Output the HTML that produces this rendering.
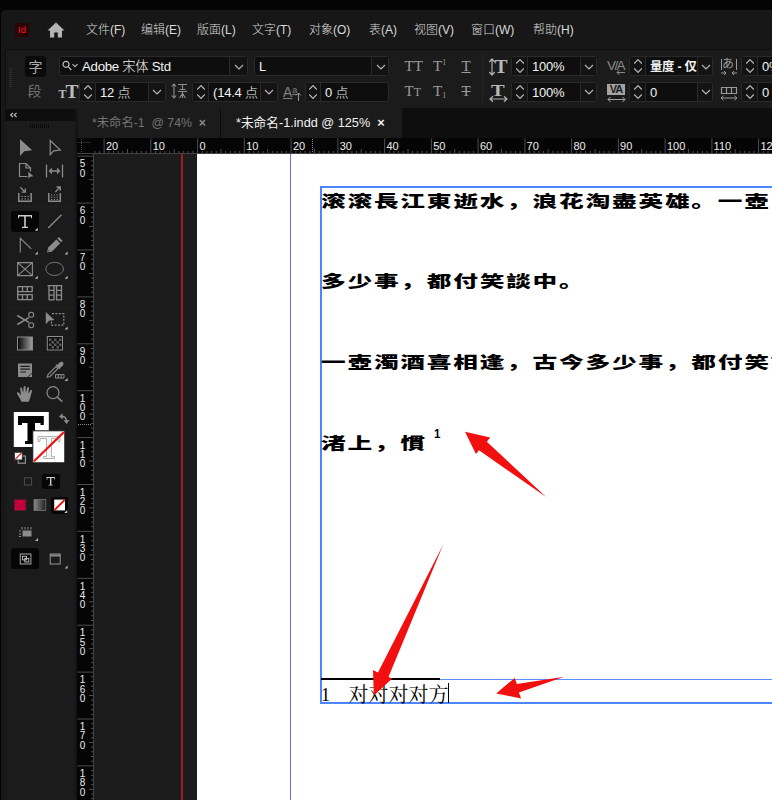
<!DOCTYPE html>
<html lang="zh-CN">
<head>
<meta charset="utf-8">
<title>InDesign</title>
<style>
*{box-sizing:border-box;margin:0;padding:0}
html,body{width:772px;height:800px;overflow:hidden;background:#040404}
body{position:relative;font-family:"Liberation Sans","Noto Sans CJK SC",sans-serif;color:#dcdcdc;font-size:12px}
.abs{position:absolute}
#win{position:absolute;left:1px;top:10px;width:771px;height:790px;background:#171717;border-top-left-radius:5px;overflow:hidden}
/* menu bar */
#menubar{position:absolute;left:0;top:0;width:771px;height:39px;background:#171717}
.mi{position:absolute;top:12px;font-size:12px;line-height:16px;color:#dadada;font-weight:300;white-space:nowrap}
/* control panel */
#cp{position:absolute;left:4px;top:39px;width:767px;height:59px;background:#1b1b1b;border-top:1px solid #0f0f0f;border-left:1px solid #0f0f0f}
.fld{position:absolute;height:21px;background:#0e0e0e;border:1px solid #2b2b2b;border-radius:3px;color:#f0f0f0;font-size:13px;line-height:19px;white-space:nowrap;overflow:hidden}
.btn{position:absolute;height:21px;background:#191919;border:1px solid #2b2b2b;border-radius:3px}
.ico{position:absolute;color:#a8a8a8}
/* tabs */
#tabbar{position:absolute;left:76px;top:98px;width:695px;height:30px;background:#0e0e0e}
.tab{position:absolute;top:0;height:30px;font-size:12.3px;line-height:31px;white-space:nowrap}
/* rulers */
#hr{position:absolute;left:76px;top:128px;width:695px;height:16px;background:#060606}
#vr{position:absolute;left:76px;top:144px;width:16px;height:646px;background:#060606}
.hl{position:absolute;font-size:11px;line-height:12px;color:#ececec}
.vl{position:absolute;width:7px;font-size:10px;line-height:9.2px;color:#ececec;text-align:center;word-break:break-all}
/* tools */
#tools{position:absolute;left:4px;top:98px;width:72px;height:692px;background:#1b1b1b}
/* canvas */
#paste{position:absolute;left:92px;top:144px;width:679px;height:646px;background:#1c1c1c}
#page{position:absolute;left:196px;top:144px;width:575px;height:646px;background:#fff}
.doc{position:absolute;color:#000;font-family:"Noto Sans CJK TC","Noto Sans CJK SC",sans-serif;font-weight:900;font-size:16.2px;line-height:24px;white-space:nowrap;transform-origin:0 0;transform:scaleX(1.524);letter-spacing:1.17px}
.fn{position:absolute;color:#000;font-family:"Noto Serif CJK SC","Liberation Serif",serif;font-weight:400;font-size:20px;line-height:24px;white-space:nowrap}
.bx{position:absolute;border:1px solid #2a2a2a;border-radius:3px}
.ct{line-height:19px;white-space:nowrap;font-weight:300}
</style>
</head>
<body>
<div id="win">
  <div id="menubar">
    <div class="abs" style="left:14px;top:13px;width:14px;height:14px;background:#2e0306;border-radius:2px;color:#f01c24;font-size:9.5px;font-weight:normal;line-height:14px;text-align:center">Id</div>
    <svg class="abs" style="left:46px;top:12px" width="18" height="16" viewBox="0 0 18 16"><path d="M9 0.5 L0.5 8.5 H3 V15.5 H7.2 V10.5 H10.8 V15.5 H15 V8.5 H17.5 Z" fill="#b4b4b4"/></svg>
    <div class="mi" style="left:85px">文件(F)</div>
    <div class="mi" style="left:140px">编辑(E)</div>
    <div class="mi" style="left:196px">版面(L)</div>
    <div class="mi" style="left:251px">文字(T)</div>
    <div class="mi" style="left:308px">对象(O)</div>
    <div class="mi" style="left:368px">表(A)</div>
    <div class="mi" style="left:413px">视图(V)</div>
    <div class="mi" style="left:470px">窗口(W)</div>
    <div class="mi" style="left:532px">帮助(H)</div>
  </div>
  <div id="cp"></div>
  <div id="tabbar">
    <div class="tab" style="left:0;width:144px;background:#1b1b1b;color:#747474;padding-left:15px;border-right:1px solid #0c0c0c">*未命名-1 &nbsp;@ 74% &nbsp;<b style="color:#888">×</b></div>
    <div class="tab" style="left:144px;width:181px;background:#1b1b1b;color:#f2f2f2;padding-left:15px;font-size:12.7px">*未命名-1.indd @ 125% &nbsp;<b>×</b></div>
  </div>
  <div id="paste"></div>
  <div id="page"></div>
  <div id="ov" class="abs" style="left:-1px;top:-10px;width:772px;height:800px">
    <!--TL-START-->
    <!-- tools -->
    <div class="abs" style="left:5px;top:108px;width:69.5px;height:692px;background:#1b1b1b"></div>
    <div class="abs" style="left:74.5px;top:108px;width:3px;height:692px;background:#141414"></div>
    <div class="abs" style="left:5px;top:108.5px;width:69.5px;height:12px;background:#0e0e0e"></div>
    <div class="abs" style="left:30px;top:124px;width:19px;height:4px;background:repeating-linear-gradient(90deg,#0c0c0c 0 1px,transparent 1px 2px)"></div>
    <div class="abs" style="left:11px;top:210.5px;width:27.5px;height:21.5px;background:#060606;border-radius:3px"></div>
    <div class="abs" style="left:42px;top:473.5px;width:17.5px;height:15.0px;background:#060606;border-radius:3px"></div>
    <div class="abs" style="left:51px;top:496.5px;width:17px;height:17.0px;background:#060606;border-radius:3px"></div>
    <div class="abs" style="left:11px;top:548px;width:27.5px;height:21px;background:#060606;border-radius:3px"></div>
    <div class="abs" style="left:8px;top:205.5px;width:64px;height:1px;background:#1f1f1f"></div>
    <div class="abs" style="left:8px;top:306.5px;width:64px;height:1px;background:#1f1f1f"></div>
    <div class="abs" style="left:8px;top:356.5px;width:64px;height:1px;background:#1f1f1f"></div>
    <svg class="abs" style="left:0;top:0" width="80" height="800" viewBox="0 0 80 800"><path d="M13 112.8L10.6 115L13 117.2M16.6 112.8L14.2 115L16.6 117.2" fill="none" stroke="#c4c4c4" stroke-width="1.1"/><path d="M20 139.3V156L24.3 151.3L32.2 150.2Z" fill="#8c8c8c"/><path d="M50.2 140.5V154.6L53.6 150.9L60.3 150Z" fill="none" stroke="#8c8c8c" stroke-width="1.2" stroke-linejoin="miter"/><path d="M27.5 176.5H19.5V163.5H26L30.5 168V171.5M26 163.5V168H30.5" fill="none" stroke="#8c8c8c" stroke-width="1.2"/><path d="M28.3 171.8V178.6L30.2 176.7L33.4 176.2Z" fill="#8c8c8c"/><path d="M46.5 164.5V177.5M62.5 164.5V177.5M49.5 171H59.5M52 168.5L49.5 171L52 173.5M57 168.5L59.5 171L57 173.5" fill="none" stroke="#8c8c8c" stroke-width="1.3"/><path d="M18.8 193V201.3H31.2V193" fill="none" stroke="#8c8c8c" stroke-width="1.5"/><path d="M20.3 187.2L25 191.9M25.3 188.6V192.2H21.7" fill="none" stroke="#8c8c8c" stroke-width="1.3"/><path d="M21.5 196.5H23M24.5 196.5H26M27.5 196.5H29M21.5 199H23M24.5 199H26M27.5 199H29" stroke="#8c8c8c" stroke-width="1.2"/><path d="M48.8 193V201.3H60.3V193" fill="none" stroke="#8c8c8c" stroke-width="1.5"/><path d="M55.3 192L60 187.3M56.5 187H60.3V190.8" fill="none" stroke="#8c8c8c" stroke-width="1.3"/><path d="M51 195H52.3M53.8 195H55.1M56.6 195H57.9M51 197.3H52.3M53.8 197.3H55.1M56.6 197.3H57.9M51 199.5H52.3M53.8 199.5H55.1M56.6 199.5H57.9" stroke="#8c8c8c" stroke-width="1.1"/><path d="M18 215H32V218.3H31V216.4H25.8V226.8H28V228H22V226.8H24.2V216.4H19V218.3H18Z" fill="#cdcdcd"/><path d="M37.8 230.8H34.8L37.8 227.8Z" fill="#c8c8c8"/><path d="M48.2 228L61.5 214.8" stroke="#8c8c8c" stroke-width="1.3"/><path d="M20.3 252.5V238.3L31.3 248.8" fill="none" stroke="#8c8c8c" stroke-width="1.1"/><path d="M37.8 254.6H34.8L37.8 251.6Z" fill="#b8b8b8"/><path d="M47 252.5L48.2 247.6L56.4 239.4L60.2 243.2L52 251.4Z" fill="#8c8c8c"/><path d="M57.3 238.5L58.8 237L62.6 240.8L61.1 242.3Z" fill="#8c8c8c"/><path d="M48.1 251.2L49.3 250" stroke="#1b1b1b" stroke-width="0.9"/><path d="M67.6 254.6H64.6L67.6 251.6Z" fill="#b8b8b8"/><path d="M17.6 262.6H32.4V275.6H17.6ZM17.6 262.6L32.4 275.6M32.4 262.6L17.6 275.6" fill="none" stroke="#8c8c8c" stroke-width="1.1"/><path d="M37.8 278.8H34.8L37.8 275.8Z" fill="#b8b8b8"/><ellipse cx="54.6" cy="268.9" rx="8.8" ry="6.6" fill="none" stroke="#747474" stroke-width="1"/><path d="M67.6 278.8H64.6L67.6 275.8Z" fill="#b8b8b8"/><path d="M17.7 286.5V300M17.7 286.7H32.8M17.7 291.7H32.8M17.7 294.7H32.8M17.7 299.6H32.8M22.5 286.7V291.7M27.3 286.7V291.7M32.2 286.7V291.7M22.5 294.7V299.6M27.3 294.7V299.6M32.2 294.7V299.6" fill="none" stroke="#8c8c8c" stroke-width="1.3"/><path d="M47.5 285.7H62.3M49 285.7V300.3M54 285.7V300.3M56.5 285.7V300.3M61.5 285.7V300.3M49 290.3H54M49 295.2H54M49 299.8H54M56.5 290.3H61.5M56.5 295.2H61.5M56.5 299.8H61.5" fill="none" stroke="#8c8c8c" stroke-width="1.3"/><path d="M17.3 315.5L29 322.3M17.3 324.5L29 317.7" stroke="#8c8c8c" stroke-width="1.5"/><circle cx="31.2" cy="314.8" r="2.5" fill="none" stroke="#8c8c8c" stroke-width="1.1"/><circle cx="31.2" cy="325.2" r="2.5" fill="none" stroke="#8c8c8c" stroke-width="1.1"/><path d="M45.8 312V324.3L49 320.8L54.4 320Z" fill="#8c8c8c"/><path d="M52 313.6H63.8V325.2H51.5V321.5" fill="none" stroke="#8c8c8c" stroke-width="1.2" stroke-dasharray="2 1.4"/><path d="M67.6 329.5H64.6L67.6 326.5Z" fill="#b8b8b8"/><path d="M47.2 377.3L48 374.5L56 366.5L58 368.5L50 376.5Z" fill="none" stroke="#8c8c8c" stroke-width="1.1"/><path d="M56 364.5L60 368.5M57.6 366L60.3 362.8Q62 361.8 62.8 363.2Q63.2 364.5 62 365.6L59 368Z" fill="#8c8c8c" stroke="#8c8c8c" stroke-width="1.3"/><path d="M55.5 374.6H64V378H55.5ZM58.3 374.6V378M61.1 374.6V378" fill="none" stroke="#8c8c8c" stroke-width="1"/><path d="M67.6 381H64.6L67.6 378Z" fill="#b8b8b8"/><path d="M18 363.5H32V372.5L27.5 377H18Z" fill="#8c8c8c"/><path d="M20.3 366.4H29.8M20.3 369.2H29.8M20.3 372H26" stroke="#1b1b1b" stroke-width="1.2"/><path d="M28.3 377L32 373.3V377Z" fill="#8c8c8c"/><path d="M21.5 401.8C20 398.5 18.2 396 17 393.6C16.6 392.4 18 391.8 18.9 392.8L21 395.3L20.2 388.6C20.1 387.3 21.8 387.1 22.1 388.4L23.2 393L23.6 387C23.7 385.7 25.4 385.7 25.5 387L25.8 393L27.2 387.8C27.5 386.6 29.1 386.9 29 388.2L28.2 393.8L30.3 390.4C31 389.4 32.4 390.1 32 391.3C31 394.5 30.3 398 28.8 401.8Z" fill="#8c8c8c"/><circle cx="53" cy="392.6" r="6" fill="none" stroke="#8c8c8c" stroke-width="1.2"/><path d="M57.3 397L62.2 401.6" stroke="#8c8c8c" stroke-width="1.6"/><rect x="13.8" y="412" width="35" height="35" fill="#fff"/><path d="M18 416H43.8V425H40.5V423H35V444H25V441H27.5V423H22V425H18Z" fill="#000"/><rect x="32.8" y="430.8" width="32" height="32" fill="#fff" stroke="#1b1b1b" stroke-width="1"/><path d="M38 436.5H60V441.5H58V438.5H51.5V456.5H54.5V458.5H43.5V456.5H46.5V438.5H40V441.5H38Z" fill="#f4f4f4" stroke="#b4b4b4" stroke-width="1"/><path d="M34 461.2L63.8 432.2" stroke="#f20d0d" stroke-width="2.2"/><path d="M61 416.5Q66.5 416 66.5 421.5" fill="none" stroke="#8c8c8c" stroke-width="1.6"/><path d="M62.5 413.2L59 416.6L62.8 419.3Z" fill="#8c8c8c"/><path d="M63.6 420.2L66.6 424L69.4 420Z" fill="#8c8c8c"/><rect x="18.2" y="456" width="7.2" height="7.2" fill="none" stroke="#9a9a9a" stroke-width="1.1"/><rect x="14.6" y="452.3" width="7.6" height="7.6" fill="#fff" stroke="#2a2a2a" stroke-width="0.8"/><path d="M15.3 459.2L21.5 453" stroke="#e02020" stroke-width="1.2"/><rect x="24.4" y="477.8" width="7.2" height="7.2" fill="none" stroke="#4e4e4e" stroke-width="1"/><path d="M46.6 477H54.8V479.4H54V478H51.4V484.7H52.7V485.6H48.7V484.7H50V478H47.4V479.4H46.6Z" fill="#cfcfcf"/><defs><linearGradient id="g1" x1="0" x2="1" y1="0" y2="0"><stop offset="0" stop-color="#8a8a8a"/><stop offset="1" stop-color="#202020"/></linearGradient><linearGradient id="g2" x1="0" x2="1" y1="0" y2="0"><stop offset="0" stop-color="#050505"/><stop offset="1" stop-color="#a0a0a0"/></linearGradient></defs><rect x="14.3" y="499.6" width="11.6" height="10.8" fill="#c4003c" stroke="#5a2030" stroke-width="0.6"/><rect x="34" y="499.6" width="11.8" height="10.8" fill="url(#g1)" stroke="#777" stroke-width="0.8"/><rect x="54.2" y="499.6" width="10.8" height="10.8" fill="#fff"/><path d="M54.6 510L64.6 500" stroke="#f20d0d" stroke-width="1.8"/><path d="M67.2 513H64.2L67.2 510Z" fill="#c8c8c8"/><rect x="17.5" y="337" width="15" height="13" fill="url(#g2)" stroke="#8c8c8c" stroke-width="1"/><rect x="47.3" y="336.5" width="15.2" height="13.5" fill="#111" stroke="#8c8c8c" stroke-width="1"/><path d="M49 338.5H51.5V341H49ZM54 338.5H56.5V341H54ZM59 338.5H61.5V341H59ZM51.5 341H54V343.5H51.5ZM56.5 341H59V343.5H56.5ZM49 343.5H51.5V346H49ZM54 343.5H56.5V346H54ZM59 343.5H61.5V346H59ZM51.5 346H54V348.5H51.5ZM56.5 346H59V348.5H56.5Z" fill="#5a5a5a"/><rect x="22.5" y="530.5" width="9" height="6" fill="#8c8c8c"/><path d="M22 527V529.5M25 527V529.5M28 527V529.5M31 527V529.5M19 531H21M19 534H21M19 536.5H21" stroke="#8c8c8c" stroke-width="1"/><path d="M38 541H35L38 538Z" fill="#b8b8b8"/><rect x="20.3" y="554" width="10.6" height="10" fill="none" stroke="#9a9a9a" stroke-width="1.1"/><rect x="22.5" y="556.3" width="4" height="3.6" fill="none" stroke="#c8c8c8" stroke-width="0.9"/><rect x="24.8" y="558.4" width="4" height="3.6" fill="none" stroke="#c8c8c8" stroke-width="0.9"/><rect x="50.2" y="554" width="10" height="10" fill="none" stroke="#8c8c8c" stroke-width="1.1"/><path d="M50.2 555.5H60.2" stroke="#8c8c8c" stroke-width="2"/><path d="M67.6 568.5H64.6L67.6 565.5Z" fill="#b8b8b8"/></svg>
    <!--TL-END-->
    <!--RU-START-->
    <!-- rulers -->
    <div class="abs" style="left:77px;top:138px;width:695px;height:16px;background:#050505;border-bottom:1px solid #444"></div>
    <div class="abs" style="left:77px;top:154px;width:17px;height:646px;background:#050505;border-right:1px solid #444"></div>
    <svg class="abs" style="left:0;top:0" width="772" height="800" viewBox="0 0 772 800"><path d="M94.8 151V153M99.4 151V153M104.1 138.5V153M108.8 151V153M113.5 151V153M118.1 151V153M122.8 151V153M127.5 149V153M132.1 151V153M136.8 151V153M141.5 151V153M146.2 151V153M150.8 138.5V153M155.5 151V153M160.2 151V153M164.9 151V153M169.6 151V153M174.2 149V153M178.9 151V153M183.6 151V153M188.2 151V153M192.9 151V153M197.6 138.5V153M202.3 151V153M206.9 151V153M211.6 151V153M216.3 151V153M221.0 149V153M225.6 151V153M230.3 151V153M235.0 151V153M239.7 151V153M244.3 138.5V153M249.0 151V153M253.7 151V153M258.4 151V153M263.1 151V153M267.7 149V153M272.4 151V153M277.1 151V153M281.8 151V153M286.4 151V153M291.1 138.5V153M295.8 151V153M300.4 151V153M305.1 151V153M309.8 151V153M314.5 149V153M319.1 151V153M323.8 151V153M328.5 151V153M333.2 151V153M337.9 138.5V153M342.5 151V153M347.2 151V153M351.9 151V153M356.5 151V153M361.2 149V153M365.9 151V153M370.6 151V153M375.2 151V153M379.9 151V153M384.6 138.5V153M389.3 151V153M393.9 151V153M398.6 151V153M403.3 151V153M408.0 149V153M412.6 151V153M417.3 151V153M422.0 151V153M426.7 151V153M431.4 138.5V153M436.0 151V153M440.7 151V153M445.4 151V153M450.0 151V153M454.7 149V153M459.4 151V153M464.1 151V153M468.8 151V153M473.4 151V153M478.1 138.5V153M482.8 151V153M487.4 151V153M492.1 151V153M496.8 151V153M501.5 149V153M506.1 151V153M510.8 151V153M515.5 151V153M520.2 151V153M524.9 138.5V153M529.5 151V153M534.2 151V153M538.9 151V153M543.5 151V153M548.2 149V153M552.9 151V153M557.6 151V153M562.2 151V153M566.9 151V153M571.6 138.5V153M576.3 151V153M580.9 151V153M585.6 151V153M590.3 151V153M595.0 149V153M599.6 151V153M604.3 151V153M609.0 151V153M613.7 151V153M618.4 138.5V153M623.0 151V153M627.7 151V153M632.4 151V153M637.0 151V153M641.7 149V153M646.4 151V153M651.1 151V153M655.8 151V153M660.4 151V153M665.1 138.5V153M669.8 151V153M674.4 151V153M679.1 151V153M683.8 151V153M688.5 149V153M693.1 151V153M697.8 151V153M702.5 151V153M707.2 151V153M711.9 138.5V153M716.5 151V153M721.2 151V153M725.9 151V153M730.5 151V153M735.2 149V153M739.9 151V153M744.6 151V153M749.2 151V153M753.9 151V153M758.6 138.5V153M763.3 151V153M768.0 151V153M772.6 151V153M77.5 156.2H93M91 160.9H93M91 165.6H93M91 170.3H93M91 175.0H93M89 179.7H93M91 184.3H93M91 189.0H93M91 193.7H93M91 198.4H93M77.5 203.1H93M91 207.8H93M91 212.5H93M91 217.2H93M91 221.9H93M89 226.5H93M91 231.2H93M91 235.9H93M91 240.6H93M91 245.3H93M77.5 250.0H93M91 254.7H93M91 259.4H93M91 264.1H93M91 268.8H93M89 273.5H93M91 278.1H93M91 282.8H93M91 287.5H93M91 292.2H93M77.5 296.9H93M91 301.6H93M91 306.3H93M91 311.0H93M91 315.7H93M89 320.4H93M91 325.0H93M91 329.7H93M91 334.4H93M91 339.1H93M77.5 343.8H93M91 348.5H93M91 353.2H93M91 357.9H93M91 362.6H93M89 367.2H93M91 371.9H93M91 376.6H93M91 381.3H93M91 386.0H93M77.5 390.7H93M91 395.4H93M91 400.1H93M91 404.8H93M91 409.5H93M89 414.1H93M91 418.8H93M91 423.5H93M91 428.2H93M91 432.9H93M77.5 437.6H93M91 442.3H93M91 447.0H93M91 451.7H93M91 456.4H93M89 461.0H93M91 465.7H93M91 470.4H93M91 475.1H93M91 479.8H93M77.5 484.5H93M91 489.2H93M91 493.9H93M91 498.6H93M91 503.3H93M89 507.9H93M91 512.6H93M91 517.3H93M91 522.0H93M91 526.7H93M77.5 531.4H93M91 536.1H93M91 540.8H93M91 545.5H93M91 550.2H93M89 554.9H93M91 559.5H93M91 564.2H93M91 568.9H93M91 573.6H93M77.5 578.3H93M91 583.0H93M91 587.7H93M91 592.4H93M91 597.1H93M89 601.8H93M91 606.4H93M91 611.1H93M91 615.8H93M91 620.5H93M77.5 625.2H93M91 629.9H93M91 634.6H93M91 639.3H93M91 644.0H93M89 648.6H93M91 653.3H93M91 658.0H93M91 662.7H93M91 667.4H93M77.5 672.1H93M91 676.8H93M91 681.5H93M91 686.2H93M91 690.9H93M89 695.5H93M91 700.2H93M91 704.9H93M91 709.6H93M91 714.3H93M77.5 719.0H93M91 723.7H93M91 728.4H93M91 733.1H93M91 737.8H93M89 742.5H93M91 747.1H93M91 751.8H93M91 756.5H93M91 761.2H93M77.5 765.9H93M91 770.6H93M91 775.3H93M91 780.0H93M91 784.7H93M89 789.4H93M91 794.0H93M91 798.7H93" fill="none" stroke="#4e4e4e" stroke-width="1"/><path d="M78.5 142.5H91M81.5 139V152" fill="none" stroke="#4c4c4c" stroke-width="1" stroke-dasharray="1 1"/><path d="M312.5 139V152M78 424.5H91" fill="none" stroke="#8a8a8a" stroke-width="1" stroke-dasharray="1 1"/></svg>
    <div class="hl" style="left:105.9px;top:140px">20</div>
    <div class="hl" style="left:152.7px;top:140px">10</div>
    <div class="hl" style="left:199.4px;top:140px">0</div>
    <div class="hl" style="left:246.2px;top:140px">10</div>
    <div class="hl" style="left:292.9px;top:140px">20</div>
    <div class="hl" style="left:339.7px;top:140px">30</div>
    <div class="hl" style="left:386.4px;top:140px">40</div>
    <div class="hl" style="left:433.2px;top:140px">50</div>
    <div class="hl" style="left:479.9px;top:140px">60</div>
    <div class="hl" style="left:526.6px;top:140px">70</div>
    <div class="hl" style="left:573.4px;top:140px">80</div>
    <div class="hl" style="left:620.1px;top:140px">90</div>
    <div class="hl" style="left:666.9px;top:140px">100</div>
    <div class="hl" style="left:713.6px;top:140px">110</div>
    <div class="hl" style="left:760.4px;top:140px">120</div>
    <div class="vl" style="left:79px;top:159.4px">50</div>
    <div class="vl" style="left:79px;top:206.3px">60</div>
    <div class="vl" style="left:79px;top:253.2px">70</div>
    <div class="vl" style="left:79px;top:300.1px">80</div>
    <div class="vl" style="left:79px;top:347.0px">90</div>
    <div class="vl" style="left:79px;top:393.9px">100</div>
    <div class="vl" style="left:79px;top:440.8px">110</div>
    <div class="vl" style="left:79px;top:487.7px">120</div>
    <div class="vl" style="left:79px;top:534.6px">130</div>
    <div class="vl" style="left:79px;top:581.5px">140</div>
    <div class="vl" style="left:79px;top:628.4px">150</div>
    <div class="vl" style="left:79px;top:675.3px">160</div>
    <div class="vl" style="left:79px;top:722.2px">170</div>
    <div class="vl" style="left:79px;top:769.1px">180</div>
    <!--RU-END-->
    <!--CP-START-->
    <!-- control panel -->
    <div class="abs" style="left:9px;top:68px;width:3px;height:20px;background:repeating-linear-gradient(180deg,#2e2e2e 0 1px,transparent 1px 2px)"></div>
    <div class="bx" style="left:25px;top:56px;width:21px;height:21px;background:#0a0a0a;border-color:#0a0a0a"></div>
    <div class="abs ct" style="left:28.5px;top:57.5px;font-size:14px;color:#ababab;font-weight:400">字</div>
    <div class="abs ct" style="left:27.5px;top:82px;font-size:14px;color:#727272;font-weight:400">段</div>
    <div class="bx" style="left:59px;top:56px;width:189px;height:20px;background:#0e0e0e;"></div>
    <div class="abs" style="left:230px;top:57px;width:17px;height:18px;background:#121212"></div>
    <div class="abs" style="left:229px;top:57px;width:1px;height:18px;background:#2a2a2a"></div>
    <svg class="abs" style="left:233.5px;top:63.5px" width="10" height="6" viewBox="0 0 10 6"><path d="M1 1 L5 5 L9 1" fill="none" stroke="#b4b4b4" stroke-width="1.15"/></svg>
    <svg class="abs" style="left:62px;top:60px" width="18" height="12" viewBox="0 0 18 12"><circle cx="4" cy="4.3" r="3" fill="none" stroke="#bdbdbd" stroke-width="1.2"/><path d="M6.2 6.6 L9.3 10" stroke="#bdbdbd" stroke-width="1.3"/><path d="M10.5 4.2 L13 6.7 L15.5 4.2" fill="none" stroke="#bdbdbd" stroke-width="1.1"/></svg>
    <div class="abs ct" style="left:82px;top:57px;font-size:13.3px;color:#f2f2f2;letter-spacing:-0.3px">Adobe 宋体 Std</div>
    <div class="bx" style="left:253.5px;top:56px;width:135.5px;height:20px;background:#0e0e0e;"></div>
    <div class="abs" style="left:372px;top:57px;width:16px;height:18px;background:#121212"></div>
    <div class="abs" style="left:371px;top:57px;width:1px;height:18px;background:#2a2a2a"></div>
    <svg class="abs" style="left:375.5px;top:63.5px" width="10" height="6" viewBox="0 0 10 6"><path d="M1 1 L5 5 L9 1" fill="none" stroke="#b4b4b4" stroke-width="1.15"/></svg>
    <div class="abs ct" style="left:259px;top:57px;font-size:13px;color:#f2f2f2;letter-spacing:-0.2px">L</div>
    <div class="abs" style="left:58.5px;top:83px;width:18px;height:18px;color:#bcbcbc;font-family:'Liberation Serif',serif;line-height:18px;white-space:nowrap"><span style="font-size:12px;font-weight:bold">T</span><span style="font-size:19.5px;font-weight:bold;margin-left:-1px">T</span></div>
    <div class="bx" style="left:79px;top:81.5px;width:87px;height:20.0px;background:#0e0e0e;"></div>
    <div class="abs" style="left:80px;top:82.5px;width:15px;height:18.0px;background:#131313"></div>
    <div class="abs" style="left:95px;top:82.5px;width:1px;height:18.0px;background:#2a2a2a"></div>
    <svg class="abs" style="left:82.5px;top:83.5px" width="10" height="16" viewBox="0 0 10 16"><path d="M1.2 5.5 L5 1.7 L8.8 5.5 M1.2 10.5 L5 14.3 L8.8 10.5" fill="none" stroke="#b8b8b8" stroke-width="1.2"/></svg>
    <div class="abs" style="left:148.5px;top:82.5px;width:16.5px;height:18.0px;background:#131313"></div>
    <div class="abs" style="left:147.5px;top:82.5px;width:1px;height:18.0px;background:#2a2a2a"></div>
    <svg class="abs" style="left:152.25px;top:89.0px" width="10" height="6" viewBox="0 0 10 6"><path d="M1 1 L5 5 L9 1" fill="none" stroke="#b4b4b4" stroke-width="1.15"/></svg>
    <div class="abs ct" style="left:100px;top:82.5px;font-size:13px;color:#f2f2f2;letter-spacing:-0.2px">12 点</div>
    <svg class="abs" style="left:171px;top:83px" width="17" height="17" viewBox="0 0 17 17"><path d="M3 1 V15 M0.8 3.5 L3 1 L5.2 3.5 M0.8 12.5 L3 15 L5.2 12.5" fill="none" stroke="#8e8e8e" stroke-width="1.1"/><path d="M7 1.5 H16 M7 8.5 H16 M11.5 1.5 V6.5 M8.5 6.5 H14.5 M11.5 8.5 V15 M8.5 15 L11.5 10.5 L14.5 15" fill="none" stroke="#8e8e8e" stroke-width="1.1"/></svg>
    <div class="bx" style="left:192px;top:81.5px;width:86px;height:20.0px;background:#0e0e0e;"></div>
    <div class="abs" style="left:193px;top:82.5px;width:15px;height:18.0px;background:#131313"></div>
    <div class="abs" style="left:208px;top:82.5px;width:1px;height:18.0px;background:#2a2a2a"></div>
    <svg class="abs" style="left:195.5px;top:83.5px" width="10" height="16" viewBox="0 0 10 16"><path d="M1.2 5.5 L5 1.7 L8.8 5.5 M1.2 10.5 L5 14.3 L8.8 10.5" fill="none" stroke="#b8b8b8" stroke-width="1.2"/></svg>
    <div class="abs" style="left:260.5px;top:82.5px;width:16.5px;height:18.0px;background:#131313"></div>
    <div class="abs" style="left:259.5px;top:82.5px;width:1px;height:18.0px;background:#2a2a2a"></div>
    <svg class="abs" style="left:264.25px;top:89.0px" width="10" height="6" viewBox="0 0 10 6"><path d="M1 1 L5 5 L9 1" fill="none" stroke="#b4b4b4" stroke-width="1.15"/></svg>
    <div class="abs ct" style="left:213px;top:82.5px;font-size:13px;color:#f2f2f2;letter-spacing:-0.2px">(14.4 点</div>
    <div class="abs" style="left:283px;top:82px;width:20px;height:20px;color:#808080;font-size:14px;line-height:16px;white-space:nowrap"><span style="text-decoration:underline">A</span><span style="font-size:9px;vertical-align:4px;text-decoration:underline">a</span></div>
    <svg class="abs" style="left:295px;top:92px" width="7" height="10" viewBox="0 0 7 10"><path d="M3.5 1 V9 M1 3.5 L3.5 1 L6 3.5" fill="none" stroke="#9a9a9a" stroke-width="1"/></svg>
    <div class="bx" style="left:305px;top:81.5px;width:84px;height:20.0px;background:#0e0e0e;"></div>
    <div class="abs" style="left:306px;top:82.5px;width:14px;height:18.0px;background:#131313"></div>
    <div class="abs" style="left:320px;top:82.5px;width:1px;height:18.0px;background:#2a2a2a"></div>
    <svg class="abs" style="left:308.0px;top:83.5px" width="10" height="16" viewBox="0 0 10 16"><path d="M1.2 5.5 L5 1.7 L8.8 5.5 M1.2 10.5 L5 14.3 L8.8 10.5" fill="none" stroke="#b8b8b8" stroke-width="1.2"/></svg>
    <div class="abs ct" style="left:325px;top:82.5px;font-size:13px;color:#f2f2f2;letter-spacing:-0.2px">0 点</div>
    <div class="abs" style="left:404.5px;top:57.5px;font-family:'Liberation Serif',serif;font-size:15px;line-height:17px;color:#9c9c9c;white-space:nowrap;">TT</div>
    <div class="abs" style="left:433px;top:57.5px;font-family:'Liberation Serif',serif;font-size:15px;line-height:17px;color:#9c9c9c;white-space:nowrap;">T<span style="font-size:8px;position:relative;top:-6px;line-height:1px">1</span></div>
    <div class="abs" style="left:461.5px;top:57.5px;font-family:'Liberation Serif',serif;font-size:15px;line-height:17px;color:#9c9c9c;white-space:nowrap;"><span style="text-decoration:underline">T</span></div>
    <div class="abs" style="left:404.5px;top:83px;font-family:'Liberation Serif',serif;font-size:15px;line-height:17px;color:#9c9c9c;white-space:nowrap;">T<span style="font-size:12px">T</span></div>
    <div class="abs" style="left:433px;top:83px;font-family:'Liberation Serif',serif;font-size:15px;line-height:17px;color:#9c9c9c;white-space:nowrap;">T<span style="font-size:8px;position:relative;top:2px;line-height:1px">1</span></div>
    <div class="abs" style="left:461.5px;top:83px;font-family:'Liberation Serif',serif;font-size:15px;line-height:17px;color:#9c9c9c;white-space:nowrap;"><span style="text-decoration:line-through">T</span></div>
    <div class="abs" style="left:482px;top:54px;width:1px;height:49px;background:#262626"></div>
    <svg class="abs" style="left:488px;top:58px" width="8" height="18" viewBox="0 0 8 18"><path d="M4 1 V17 M1.3 4 L4 1 L6.7 4 M1.3 14 L4 17 L6.7 14" fill="none" stroke="#b0b0b0" stroke-width="1.2"/></svg>
    <div class="abs" style="left:494.5px;top:56px;font-family:'Liberation Serif',serif;font-size:19.5px;line-height:21.5px;color:#b8b8b8;white-space:nowrap;font-weight:bold">T</div>
    <div class="bx" style="left:511px;top:56px;width:86px;height:20px;background:#0e0e0e;"></div>
    <div class="abs" style="left:512px;top:57px;width:15px;height:18px;background:#131313"></div>
    <div class="abs" style="left:527px;top:57px;width:1px;height:18px;background:#2a2a2a"></div>
    <svg class="abs" style="left:514.5px;top:58.0px" width="10" height="16" viewBox="0 0 10 16"><path d="M1.2 5.5 L5 1.7 L8.8 5.5 M1.2 10.5 L5 14.3 L8.8 10.5" fill="none" stroke="#b8b8b8" stroke-width="1.2"/></svg>
    <div class="abs" style="left:581px;top:57px;width:15px;height:18px;background:#131313"></div>
    <div class="abs" style="left:580px;top:57px;width:1px;height:18px;background:#2a2a2a"></div>
    <svg class="abs" style="left:584.0px;top:63.5px" width="10" height="6" viewBox="0 0 10 6"><path d="M1 1 L5 5 L9 1" fill="none" stroke="#b4b4b4" stroke-width="1.15"/></svg>
    <div class="abs ct" style="left:532px;top:57px;font-size:13px;color:#f2f2f2;letter-spacing:-0.2px">100%</div>
    <div class="abs" style="left:491px;top:81.5px;font-family:'Liberation Serif',serif;font-size:16px;line-height:18px;color:#b8b8b8;white-space:nowrap;font-weight:bold;transform:scaleX(1.28);transform-origin:0 0">T</div>
    <svg class="abs" style="left:489px;top:95px" width="19" height="8" viewBox="0 0 19 8"><path d="M1 4 H18 M4 1.3 L1 4 L4 6.7 M15 1.3 L18 4 L15 6.7" fill="none" stroke="#b0b0b0" stroke-width="1.2"/></svg>
    <div class="bx" style="left:511px;top:81.5px;width:86px;height:20.0px;background:#0e0e0e;"></div>
    <div class="abs" style="left:512px;top:82.5px;width:15px;height:18.0px;background:#131313"></div>
    <div class="abs" style="left:527px;top:82.5px;width:1px;height:18.0px;background:#2a2a2a"></div>
    <svg class="abs" style="left:514.5px;top:83.5px" width="10" height="16" viewBox="0 0 10 16"><path d="M1.2 5.5 L5 1.7 L8.8 5.5 M1.2 10.5 L5 14.3 L8.8 10.5" fill="none" stroke="#b8b8b8" stroke-width="1.2"/></svg>
    <div class="abs" style="left:581px;top:82.5px;width:15px;height:18.0px;background:#131313"></div>
    <div class="abs" style="left:580px;top:82.5px;width:1px;height:18.0px;background:#2a2a2a"></div>
    <svg class="abs" style="left:584.0px;top:89.0px" width="10" height="6" viewBox="0 0 10 6"><path d="M1 1 L5 5 L9 1" fill="none" stroke="#b4b4b4" stroke-width="1.15"/></svg>
    <div class="abs ct" style="left:532px;top:82.5px;font-size:13px;color:#f2f2f2;letter-spacing:-0.2px">100%</div>
    <div class="abs" style="left:607px;top:58px;font-size:13.5px;line-height:16px;color:#8a8a8a;letter-spacing:-1.6px;white-space:nowrap">V/A</div>
    <svg class="abs" style="left:616px;top:69px" width="10" height="7" viewBox="0 0 10 7"><path d="M1 3.5 H9 M3.5 1 L1 3.5 L3.5 6" fill="none" stroke="#8a8a8a" stroke-width="1"/></svg>
    <div class="bx" style="left:629px;top:56px;width:84px;height:20px;background:#0e0e0e;"></div>
    <div class="abs" style="left:630px;top:57px;width:15px;height:18px;background:#131313"></div>
    <div class="abs" style="left:645px;top:57px;width:1px;height:18px;background:#2a2a2a"></div>
    <svg class="abs" style="left:632.5px;top:58.0px" width="10" height="16" viewBox="0 0 10 16"><path d="M1.2 5.5 L5 1.7 L8.8 5.5 M1.2 10.5 L5 14.3 L8.8 10.5" fill="none" stroke="#b8b8b8" stroke-width="1.2"/></svg>
    <div class="abs" style="left:698px;top:57px;width:14px;height:18px;background:#131313"></div>
    <div class="abs" style="left:697px;top:57px;width:1px;height:18px;background:#2a2a2a"></div>
    <svg class="abs" style="left:700.5px;top:63.5px" width="10" height="6" viewBox="0 0 10 6"><path d="M1 1 L5 5 L9 1" fill="none" stroke="#b4b4b4" stroke-width="1.15"/></svg>
    <div class="abs ct" style="width:48px;overflow:hidden;left:650px;top:57px;font-size:13px;color:#f2f2f2;letter-spacing:-0.2px"><span style="font-size:12.3px;font-weight:bold">量度 - 仅</span></div>
    <div class="abs" style="left:607px;top:84px;width:18px;height:11px;background:#a4a4a4;color:#1d1d1d;font-size:11px;font-weight:bold;line-height:11px;letter-spacing:-1px;text-align:center">VA</div>
    <svg class="abs" style="left:607px;top:96px" width="19" height="7" viewBox="0 0 19 7"><path d="M1 3.5 H18 M3.5 1 L1 3.5 L3.5 6 M15.5 1 L18 3.5 L15.5 6" fill="none" stroke="#a4a4a4" stroke-width="1"/></svg>
    <div class="bx" style="left:629px;top:81.5px;width:84px;height:20.0px;background:#0e0e0e;"></div>
    <div class="abs" style="left:630px;top:82.5px;width:15px;height:18.0px;background:#131313"></div>
    <div class="abs" style="left:645px;top:82.5px;width:1px;height:18.0px;background:#2a2a2a"></div>
    <svg class="abs" style="left:632.5px;top:83.5px" width="10" height="16" viewBox="0 0 10 16"><path d="M1.2 5.5 L5 1.7 L8.8 5.5 M1.2 10.5 L5 14.3 L8.8 10.5" fill="none" stroke="#b8b8b8" stroke-width="1.2"/></svg>
    <div class="abs" style="left:698px;top:82.5px;width:14px;height:18.0px;background:#131313"></div>
    <div class="abs" style="left:697px;top:82.5px;width:1px;height:18.0px;background:#2a2a2a"></div>
    <svg class="abs" style="left:700.5px;top:89.0px" width="10" height="6" viewBox="0 0 10 6"><path d="M1 1 L5 5 L9 1" fill="none" stroke="#b4b4b4" stroke-width="1.15"/></svg>
    <div class="abs ct" style="left:650px;top:82.5px;font-size:13px;color:#f2f2f2;letter-spacing:-0.2px">0</div>
    <div class="abs" style="left:722px;top:56px;font-size:12px;line-height:13px;color:#9a9a9a;font-family:'Noto Sans CJK JP',sans-serif">あ</div>
    <svg class="abs" style="left:720px;top:58px" width="18" height="18" viewBox="0 0 18 18"><path d="M1.5 1 V12 M16.5 1 V12 M1 15 H6 M4 13 L6 15 L4 17 M17 15 H12 M14 13 L12 15 L14 17" fill="none" stroke="#9a9a9a" stroke-width="1"/></svg>
    <div class="bx" style="left:741px;top:56px;width:59px;height:20px;background:#0e0e0e;"></div>
    <div class="abs" style="left:742px;top:57px;width:15px;height:18px;background:#131313"></div>
    <div class="abs" style="left:757px;top:57px;width:1px;height:18px;background:#2a2a2a"></div>
    <svg class="abs" style="left:744.5px;top:58.0px" width="10" height="16" viewBox="0 0 10 16"><path d="M1.2 5.5 L5 1.7 L8.8 5.5 M1.2 10.5 L5 14.3 L8.8 10.5" fill="none" stroke="#b8b8b8" stroke-width="1.2"/></svg>
    <div class="abs ct" style="left:762px;top:57px;font-size:13px;color:#f2f2f2;letter-spacing:-0.2px">0%</div>
    <svg class="abs" style="left:720px;top:85px" width="18" height="17" viewBox="0 0 18 17"><path d="M1.5 2.5 H16.5 V8.5 H1.5 Z M6.5 2.5 V8.5 M11.5 2.5 V8.5" fill="none" stroke="#9a9a9a" stroke-width="1.2"/><path d="M1 13 H17 M3.5 10.8 L1 13 L3.5 15.2 M14.5 10.8 L17 13 L14.5 15.2" fill="none" stroke="#9a9a9a" stroke-width="1"/></svg>
    <div class="bx" style="left:741px;top:81.5px;width:59px;height:20.0px;background:#0e0e0e;"></div>
    <div class="abs" style="left:742px;top:82.5px;width:15px;height:18.0px;background:#131313"></div>
    <div class="abs" style="left:757px;top:82.5px;width:1px;height:18.0px;background:#2a2a2a"></div>
    <svg class="abs" style="left:744.5px;top:83.5px" width="10" height="16" viewBox="0 0 10 16"><path d="M1.2 5.5 L5 1.7 L8.8 5.5 M1.2 10.5 L5 14.3 L8.8 10.5" fill="none" stroke="#b8b8b8" stroke-width="1.2"/></svg>
    <div class="abs ct" style="left:762px;top:82.5px;font-size:13px;color:#f2f2f2;letter-spacing:-0.2px">0</div>
    <!--CP-END-->
    <!-- pasteboard bleed guide -->
    <div class="abs" style="left:181px;top:154px;width:2px;height:646px;background:#a01c22"></div>
    <!-- margin guide -->
    <div class="abs" style="left:290px;top:154px;width:1px;height:646px;background:#6a6cf5"></div>
    <!-- text frame -->
    <div class="abs" style="left:320px;top:186px;width:470px;height:518px;border:2px solid #4b86ff"></div>
    <div class="abs" style="left:322px;top:679px;width:450px;height:1px;background:#5a90ff"></div>
    <div class="abs" style="left:321px;top:678px;width:119px;height:2px;background:#000"></div>
    <div class="doc" style="left:321px;top:187.5px">滚滚長江東逝水，浪花淘盡英雄。一壺</div>
    <div class="doc" style="left:321px;top:267.5px">多少事，都付笑談中。</div>
    <div class="doc" style="left:321px;top:348.5px">一壺濁酒喜相逢，古今多少事，都付笑談</div>
    <div class="doc" style="left:321px;top:429.5px">渚上，慣</div>
    <div class="abs" style="left:434px;top:427px;color:#000;transform:scaleX(0.85);transform-origin:0 0;font-size:13.5px;font-weight:bold;line-height:14px">1</div>
    <div class="fn" style="left:321px;top:683px;font-family:'Liberation Serif',serif;font-size:18px">1</div>
    <div class="fn" style="left:348.5px;top:682px">对对对对方</div>
    <div class="abs" style="left:448px;top:683px;width:1px;height:20px;background:#000"></div>
    <svg class="abs" style="left:0;top:0" width="772" height="800" viewBox="0 0 772 800">
      <polygon points="465,431.8 490.2,437.6 486.8,441.7 546.1,497 479,450.3 475.9,454.1" fill="#f20f0f"/>
      <polygon points="443.1,544.7 388.5,677 392.3,678.5 373.8,695.6 373,670.1 378,672.5" fill="#f20f0f"/>
      <polygon points="496.2,693.4 514.7,677.9 516.9,684 564.2,676.8 518.9,692.6 521.1,698.6" fill="#f20f0f"/>
    </svg>
  </div>
</div>
</body>
</html>
